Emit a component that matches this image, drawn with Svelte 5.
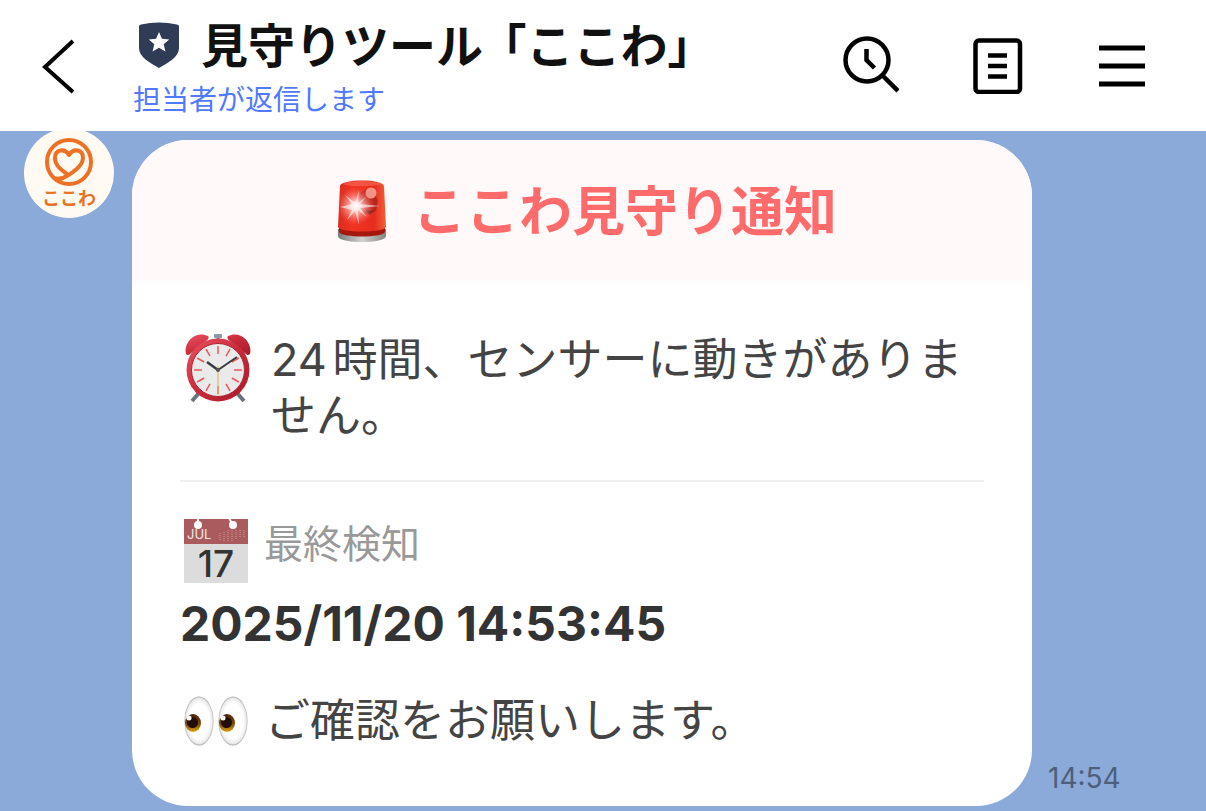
<script lang="ts">
  // Chat view of an official account: top bar plus one alert card.
  const room = { name: "見守りツール", product: "「ここわ」", status: "担当者が返信します" };

  const alert = {
    title: "ここわ見守り通知",
    message: "24時間、センサーに動きがありません。",
    label: "最終検知",
    detectedAt: "2025/11/20 14:53:45",
    request: "ご確認をお願いします。",
    sentAt: "14:54",
  };

  // clock face ticks, the bottom one sits under the second hand
  const ticks = [0, 30, 60, 90, 120, 150, 180, 210, 240, 270, 300, 330];
</script>

<div class="screen">
  <header class="topbar">
    <button type="button" class="icon back" aria-label="戻る">
      <svg width="36" height="56" viewBox="0 0 36 56" fill="none" stroke="#000" stroke-width="4">
        <path d="M33 3 5 29l28 25" />
      </svg>
    </button>

    <div class="room">
      <h1>
        <svg class="shield" width="42" height="48" viewBox="0 0 42 48" aria-hidden="true">
          <path d="M1 4Q1 3 3 2.400Q21-1.400 39 2.400Q41 3 41 4v22c0 9-11 15-20 20C12 41 1 35 1 26Z" fill="#303b56" />
          <path d="m21 10 2.900 6.800 7.300.600-5.500 4.900 1.700 7.300-6.400-3.800-6.400 3.800 1.700-7.300-5.500-4.900 7.300-.600Z" fill="#fff" />
        </svg>
        <span class="name"><span>{room.name}</span><span>{room.product}</span></span>
      </h1>
      <p>{room.status}</p>
    </div>

    <nav class="actions">
      <button type="button" class="icon" aria-label="検索">
        <svg width="57" height="60" viewBox="0 0 57 60" fill="none" stroke="#000" stroke-width="4.500">
          <circle cx="25" cy="24" r="21.500" />
          <path d="m40 39 16 16M24.500 13v11l8 8" />
        </svg>
      </button>
      <button type="button" class="icon" aria-label="ノート">
        <svg width="50" height="56" viewBox="0 0 50 56" fill="none" stroke="#000" stroke-width="4.500">
          <rect x="2.500" y="2.500" width="44.500" height="51.500" rx="3.500" />
          <path d="M15 17.500h19M15 28h19M15 38.500h19" />
        </svg>
      </button>
      <button type="button" class="icon" aria-label="メニュー">
        <svg width="48" height="44" viewBox="0 0 48 44" fill="none" stroke="#000" stroke-width="5">
          <path d="M2 4h46M2 22h46M2 40h46" />
        </svg>
      </button>
    </nav>
  </header>

  <main class="chat">
    <div class="avatar">
      <svg width="50" height="50" viewBox="0 0 50 50" fill="none" stroke="#ee7024" stroke-width="4" aria-hidden="true">
        <circle cx="25" cy="25" r="22" />
        <path d="M12 43C20 42 39 31 39 21c0-9-10-10-14-3-4-7-14-6-14 3 0 8 7 12 12 16" stroke-linejoin="round" />
        <path d="M7 38q7 4 16-1l-9 8Z" fill="#ee7024" stroke="none" />
      </svg>
      <span>ここわ</span>
    </div>

    <article class="card">
      <h2>
        <svg width="50" height="64" viewBox="0 0 50 64" aria-hidden="true">
          <defs>
            <linearGradient id="lamp"><stop stop-color="#d92d1f" /><stop offset=".3" stop-color="#f23424" /><stop offset=".75" stop-color="#e62c1e" /><stop offset="1" stop-color="#f2603a" /></linearGradient>
            <linearGradient id="base"><stop stop-color="#77797a" /><stop offset=".5" stop-color="#d2d2cf" /><stop offset="1" stop-color="#858582" /></linearGradient>
            <radialGradient id="glow"><stop stop-color="#fff" /><stop offset=".25" stop-color="#ffd5d5" stop-opacity=".9" /><stop offset="1" stop-color="#ff7065" stop-opacity="0" /></radialGradient>
          </defs>
          <path d="M1 50v7c0 8 48 8 48 0v-7Z" fill="url(#base)" />
          <path d="M2 46v7c2 6 44 6 46 0v-7Z" fill="#a6180f" />
          <path d="M3 7C3-.500 47-.500 47 7l2 41c-2 6-46 6-48 0Z" fill="url(#lamp)" />
          <path d="M6 5C11 1 39 1 44 5 38 8 12 8 6 5Z" fill="#ff8a72" opacity=".4" />
          <path d="m24 13 10-4 7 12-2 11-12 4-7-9Z" fill="#7d1712" opacity=".45" />
          <path d="m28 31 9 1-4 4Z" fill="#44100e" opacity=".6" />
          <circle cx="34" cy="14" r="5.500" fill="#ffb0a0" opacity=".8" />
          <circle cx="19" cy="27" r="19" fill="url(#glow)" />
          <path d="m19 22 3-11-1 13 8-6-6 7 20 2-20 2 7 9-9-7 1 15-4-14-8 9 5-10-12-3 12-3-7-9 9 7Z" fill="#fff" opacity=".6" />
        </svg>
        <span>{alert.title}</span>
      </h2>

      <div class="body">
        <div class="row message">
          <svg width="68" height="72" viewBox="0 0 68 72" aria-hidden="true">
            <defs>
              <linearGradient id="rim" x2="1" y2="1"><stop stop-color="#ed5262" /><stop offset=".5" stop-color="#c92b3b" /><stop offset="1" stop-color="#a9192a" /></linearGradient>
            </defs>
            <path d="m15 61-7 8M53 61l7 8" stroke="#69737b" stroke-width="4" />
            <path d="M34 10V4" stroke="#7b858b" stroke-width="3" />
            <rect x="30" y="2" width="8" height="4" rx="1" fill="#8a9aa6" />
            <path d="m14 17-2-4M54 17l2-4" stroke="#8a9aa6" stroke-width="4" />
            <path d="M2 22C-1 10 12-2 24 4q2 2-2 5L6 22q-2 2-4 0ZM66 22c3-12-10-24-22-18q-2 2 2 5l16 13q2 2 4 0Z" fill="url(#rim)" />
            <circle cx="34" cy="38" r="31.500" fill="url(#rim)" />
            <circle cx="34" cy="38" r="26.500" fill="#e9eae9" stroke="#ac2534" stroke-width="1" />
            {#each ticks as angle}
              <path d="M34 14v8" stroke="#ee555b" stroke-width="1.500" transform="rotate({angle} 34 38)" />
            {/each}
            <path d="M34 34v29" stroke="#d9b16a" stroke-width="1" />
            <path d="m34 38-11-8" stroke="#363b3e" stroke-width="2.500" />
            <path d="m34 38 19-13" stroke="#363b3e" stroke-width="2" />
            <circle cx="34" cy="38" r="2" fill="#555" />
          </svg>
          <p>{alert.message}</p>
        </div>

        <hr />

        <div class="row detected">
          <svg class="calendar" width="66" height="66" viewBox="0 0 66 66" aria-hidden="true">
            <path d="M1 1h64v64H1Z" fill="#dcdcdc" />
            <path d="M1 1h64v25H1Z" fill="#aa5b5e" />
            <circle cx="15" cy="7" r="4" fill="#fff" />
            <circle cx="50" cy="7" r="4" fill="#fff" />
            <path d="M15 0v7M46 0l4 7" stroke="#fff" stroke-width="2" />
            <path d="M37 15v8M41 14v9M45 12v11M49 12v11M53 12v10M57 12v8M61 12v8" stroke="#d49b9d" stroke-dasharray="1 1" />
            <text x="4" y="21" font-size="13" fill="#f4e7e7">JUL</text>
            <text x="33" y="59" font-size="37" font-weight="500" text-anchor="middle" fill="#333">17</text>
          </svg>
          <span>{alert.label}</span>
        </div>
        <time class="date">{alert.detectedAt}</time>

        <div class="row request">
          <svg width="66" height="52" viewBox="0 0 66 52" aria-hidden="true">
            <defs>
              <radialGradient id="eye"><stop offset=".7" stop-color="#fff" /><stop offset=".92" stop-color="#ebebed" /><stop offset="1" stop-color="#aaa" /></radialGradient>
              <linearGradient id="iris" x2="0" y2="1"><stop stop-color="#4d2209" /><stop offset=".55" stop-color="#80480c" /><stop offset="1" stop-color="#d8a416" /></linearGradient>
            </defs>
            {#each [0, 34] as x}
              <g transform="translate({x} 0)">
                <ellipse cx="16" cy="26" rx="14.500" ry="24.500" fill="url(#eye)" />
                <ellipse cx="10" cy="28" rx="8" ry="9" fill="url(#iris)" />
                <circle cx="9.500" cy="27.500" r="5.500" fill="#210e06" />
                <circle cx="6" cy="23" r="2.500" fill="#fff" />
              </g>
            {/each}
          </svg>
          <p>{alert.request}</p>
        </div>
      </div>
    </article>

    <time class="sent">{alert.sentAt}</time>
  </main>
</div>

<style>
  :global(body) {
    margin: 0;
    background: #8caad9;
  }
  .screen {
    min-height: 100vh;
    overflow: hidden;
    color: #444;
    font-family: Inter, "Noto Sans CJK JP", sans-serif;
    text-autospace: normal;
  }
  h1,
  h2,
  p {
    margin: 0;
    font-weight: 400;
  }
  svg {
    display: block;
    flex: none;
  }

  .topbar {
    position: relative; /* messages scroll beneath it */
    z-index: 1;
    display: flex;
    align-items: center;
    box-sizing: border-box;
    height: 131px;
    padding: 0 61px 0 40px;
    background: #fff;
  }
  .icon {
    padding: 0;
    border: none;
    background: none;
    cursor: pointer;
  }
  .room {
    flex: 1;
    min-width: 0;
    margin-left: 57px;
    padding-top: 2px;
    white-space: nowrap;
  }
  h1 {
    display: flex;
    align-items: center;
    gap: 21px;
    padding-left: 5px;
    color: #111;
    font-size: 47px;
    font-weight: 600;
    line-height: 64px;
  }
  .name {
    display: flex;
    gap: 20px;
    font-feature-settings: "halt"; /* half-width brackets */
  }
  .room p {
    padding-top: 2px;
    color: #5079ff;
    font-size: 28px;
    line-height: 40px;
  }
  .actions {
    display: flex;
    align-items: center;
    gap: 74px;
  }

  .chat {
    display: flex;
    align-items: flex-start;
    padding: 9px 24px 5px;
  }
  .avatar {
    display: flex;
    flex: none;
    flex-direction: column;
    align-items: center;
    box-sizing: border-box;
    width: 90px;
    height: 90px;
    margin-top: -12px;
    padding-top: 9px;
    border-radius: 50%;
    background: #fffbf3;
    color: #e87328;
    font-size: 18px;
    font-weight: 700;
    line-height: 24px;
  }
  .card {
    flex: 1;
    min-width: 0;
    margin-left: 18px;
    border-radius: 56px;
    background: #fff;
    overflow: hidden;
  }
  h2 {
    display: flex;
    align-items: center;
    justify-content: center;
    gap: 26px;
    height: 141px;
    padding-left: 10px;
    background: #fff9f9;
    color: #ff6b6b;
    font-size: 53px;
    font-weight: 700;
  }
  h2 span {
    padding-bottom: 6px;
  }
  .body {
    padding: 51px 48px 57px;
  }
  .row {
    display: flex;
    align-items: flex-start;
  }
  .row p {
    font-size: 45px;
    line-height: 56px;
  }
  .message {
    gap: 19px;
    padding-left: 4px;
  }
  hr {
    height: 2px;
    margin: 36px 0;
    border: none;
    background: #eee;
  }
  .detected {
    gap: 15px;
    padding-left: 3px;
    color: #999;
    font-size: 39px;
    line-height: 52px;
  }
  .calendar {
    overflow: visible;
  }
  .date {
    display: block;
    margin-top: 8px;
    color: #333;
    font-size: 48px;
    font-weight: 700;
    line-height: 64px;
  }
  .request {
    align-items: center;
    gap: 16px;
    margin-top: 37px;
    padding-left: 3px;
  }
  .sent {
    flex: none;
    align-self: flex-end;
    width: 134px;
    margin: 0 0 10px 16px;
    color: #4d5f7b;
    font-size: 28px;
    line-height: 36px;
  }
</style>
